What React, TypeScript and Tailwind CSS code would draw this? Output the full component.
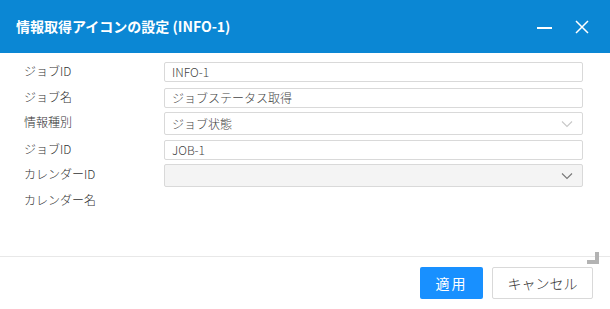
import React from 'react';

const font = { fontFamily: '"Noto Sans CJK JP", "Noto Sans", sans-serif' };

const Chevron: React.FC<{ className?: string }> = ({ className }) => (
  <svg width="12" height="8" viewBox="0 0 12 8" className={className} fill="none">
    <path d="M1 1.5 L6 6.5 L11 1.5" stroke="currentColor" strokeWidth="1.1" />
  </svg>
);

const Row: React.FC<{ label: string; className?: string; children?: React.ReactNode }> = ({ label, className, children }) => (
  <div className={`flex items-center ${className ?? ''}`}>
    <div className="w-[164px] shrink-0 pl-[24px] pb-[3px] text-[12px] text-[#333] font-light">{label}</div>
    <div className="flex-1">{children}</div>
  </div>
);

const TextBox: React.FC<{ value: string }> = ({ value }) => (
  <div className="h-[20px] border border-[#d9d9d9] rounded-[2px] px-[7px] flex items-center text-[12px] text-[#444] font-light">
    {value}
  </div>
);

export default function App() {
  return (
    <div className="w-[610px] h-[309px] bg-white flex flex-col overflow-hidden" style={font}>
      <div className="h-[53px] bg-[#0b87d4] flex items-center pl-[16px] pr-[20px] shrink-0">
        <div className="flex-1 text-white text-[14px] font-semibold pb-[1px]">情報取得アイコンの設定 (INFO-1)</div>
        <div className="w-[15px] h-[2px] bg-white mr-[23px] mt-[3px]" />
        <svg width="14" height="14" viewBox="0 0 14 14" className="text-white mr-[1px]">
          <path d="M1 1 L13 13 M13 1 L1 13" stroke="currentColor" strokeWidth="1.5" />
        </svg>
      </div>

      <div className="flex-1 relative pt-[9px] pr-[27px]">
        <Row label="ジョブID" className="h-[20px]">
          <TextBox value="INFO-1" />
        </Row>
        <Row label="ジョブ名" className="h-[20px] mt-[6px]">
          <TextBox value="ジョブステータス取得" />
        </Row>
        <Row label="情報種別" className="h-[23px] mt-[4px]">
          <div className="h-[23px] border border-[#d9d9d9] rounded-[2px] pl-[7px] pr-[9px] flex items-center text-[12px] text-[#444] font-light">
            <span className="flex-1">ジョブ状態</span>
            <Chevron className="text-[#c8c8c8]" />
          </div>
        </Row>
        <Row label="ジョブID" className="h-[20px] mt-[5px]">
          <TextBox value="JOB-1" />
        </Row>
        <Row label="カレンダーID" className="h-[23px] mt-[4px]">
          <div className="h-[23px] border border-[#d9d9d9] rounded-[2px] bg-[#f4f4f4] pr-[9px] flex items-center justify-end">
            <Chevron className="text-[#777]" />
          </div>
        </Row>
        <Row label="カレンダー名" className="h-[20px] mt-[4px]" />

        <div className="absolute right-[11px] bottom-[-8px] w-[12px] h-[12px]">
          <div className="absolute right-0 top-0 w-[4px] h-[12px] bg-[#b3b3b3]" />
          <div className="absolute right-0 bottom-0 w-[12px] h-[4px] bg-[#b3b3b3]" />
        </div>
      </div>

      <div className="h-[53px] shrink-0 border-t border-[#e8e8e8] flex items-start justify-end pt-[10px] pr-[17px] gap-[9px]">
        <button className="w-[63px] h-[32px] bg-[#1890ff] rounded-[2px] text-white text-[14px] tracking-[2px]">適用</button>
        <button className="w-[101px] h-[32px] bg-white border border-[#d9d9d9] rounded-[2px] text-[#333] text-[14px] font-light">キャンセル</button>
      </div>
    </div>
  );
}
